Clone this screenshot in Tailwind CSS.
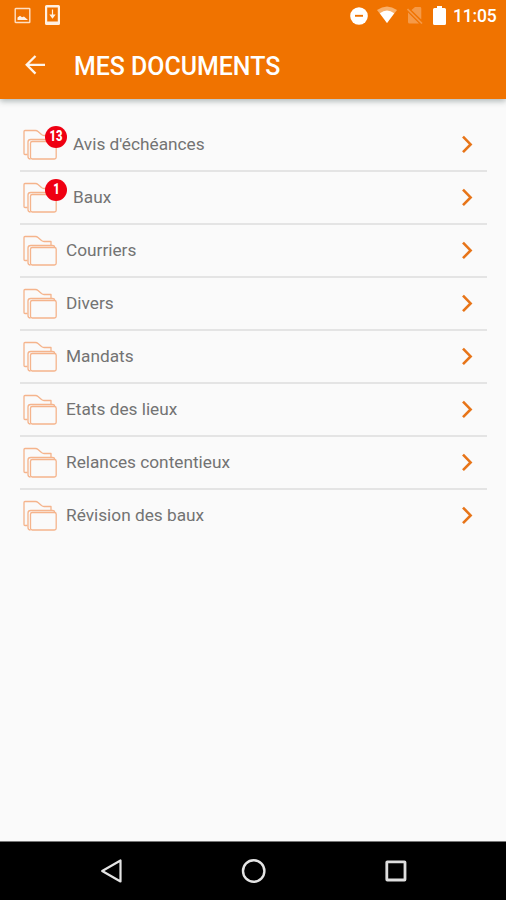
<!DOCTYPE html>
<html lang="fr">
<head>
<meta charset="utf-8">
<title>Mes documents</title>
<script src="https://cdn.jsdelivr.net/npm/@tailwindcss/browser@4"></script>
</head>
<body class="w-[506px] h-[900px] overflow-hidden flex flex-col bg-[#fafafa] font-[Roboto,sans-serif]">
<svg class="hidden">
  <symbol id="folder" viewBox="0 0 36 32">
    <g fill="none" stroke="#f5b48c" stroke-width="1.300" stroke-linejoin="round">
      <path d="M5.500 25.500H3Q2 25.500 2 24.500V2.500Q2 1.500 3 1.500H13.500Q15 1.500 16 2.400L19.500 5.500Q20.700 6.500 22 6.500H29V10"/>
      <path d="M8.500 30Q6 30 6 27.500V13Q6 10.500 8.800 10.500H30.500Q32.500 10.500 32.800 12.300"/>
      <rect x="8.500" y="12.500" width="25.700" height="17.500" rx="1.800"/>
    </g>
  </symbol>
  <symbol id="chevron" viewBox="0 0 14 20">
    <path d="M3 2.600L10.600 10.400L3 18.200" fill="none" stroke="#e77418" stroke-width="2.600"/>
  </symbol>
</svg>

<header class="h-[99px] shrink-0 bg-[#f07300] text-white shadow-[0_2px_6px_rgba(40,60,60,0.38)]">
  <div class="h-8 flex items-center justify-between pl-[14px] pr-[9px]">
    <div class="flex items-center gap-[14px]">
      <svg class="w-[17px] h-[18px]" viewBox="0 0 17 18"><rect x="1.200" y="1.500" width="14.600" height="14" rx=".6" fill="none" stroke="#ffe0c4" stroke-width="1.400"/><path d="M3.500 13V10.500L6 8.800L8 10.300L10 9.500L14 13Z" fill="#fff0e2"/></svg>
      <svg class="w-4 h-5 -mt-0.5" viewBox="0 0 16 20"><path fill="#fff0e2" fill-rule="evenodd" d="M1.500 0H13.500Q15 0 15 1.500V18.500Q15 20 13.500 20H1.500Q0 20 0 18.500V1.500Q0 0 1.500 0ZM2.200 2.500V16.500H12.800V2.500Z"/><path d="M7.500 4.500V12M5.500 10H9.500L7.500 12.800Z" fill="#fff0e2" stroke="#fff0e2" stroke-width="1.200"/></svg>
    </div>
    <div class="flex items-center">
      <svg class="w-[18px] h-[18px] mr-[9px] mt-[-1px]" viewBox="0 0 18 18"><circle cx="9" cy="9" r="8.800" fill="#fff"/><path d="M5 8.800H13" stroke="#f07300" stroke-width="1.900"/></svg>
      <svg class="w-5 h-[18px] mr-[10px] -mt-0.5" viewBox="0 0 20 18"><path d="M0 4Q10-3 20 4L10 17Z" fill="#f8b06b"/><path d="M2.800 7.300Q10 1.800 17.200 7.300L10 17Z" fill="#fff"/></svg>
      <svg class="w-4 h-[17px] mr-[10px] -mt-0.5" viewBox="0 0 16 17"><path d="M4.500 3L8 0H13Q14.300 0 14.300 1.400V12.500ZM1 5.500L12 16.500H2.500Q1 16.500 1 15Z" fill="#f59a48"/><path d="M.5 2L15 16.500" stroke="#f59a48" stroke-width="1.600"/></svg>
      <svg class="w-[13px] h-[19px] mr-[7px] mt-[-1px]" viewBox="0 0 13 19"><path d="M4 0H9V2H11.500Q13 2 13 3.500V17.500Q13 19 11.500 19H1.500Q0 19 0 17.500V3.500Q0 2 1.500 2H4Z" fill="#fff"/></svg>
      <span class="w-[44px] pt-0.5 text-[17.500px] tracking-[-0.200px] leading-none font-medium whitespace-nowrap">11:05</span>
    </div>
  </div>
  <div class="h-[67px] flex items-center pl-[25px]">
    <svg class="w-5 h-5 -mt-0.5" viewBox="0 0 20 20"><path d="M10.500 1L1.700 9.800L10.500 18.600M1.700 9.800H20" fill="none" stroke="#fff4ea" stroke-width="2.300"/></svg>
    <h1 class="ml-[29px] pt-[3px] text-[24.900px] leading-none font-medium whitespace-nowrap">MES DOCUMENTS</h1>
  </div>
</header>

<main class="grow pt-5 pl-5 pr-[19px]">
  <ul class="text-[17.250px] text-[#737373] [&>li]:h-[53px] [&>li]:flex [&>li]:items-center [&>li]:border-b-2 [&>li]:border-[#e4e4e4] [&>li:last-child]:border-transparent [&>li>span]:grow [&>li>span]:whitespace-nowrap">
    <li><div class="relative mr-[15px]"><svg class="w-9 h-8 ml-0.5"><use href="#folder"/></svg><div class="absolute left-[25px] -top-[3px] w-[22px] h-[22px] rounded-full bg-[#ef0012] text-white text-[15.500px] leading-none font-bold flex items-center justify-center"><b class="scale-x-[0.720]">13</b></div></div><span>Avis d'échéances</span><svg class="w-[14px] h-5 mr-[13px] -mt-0.5"><use href="#chevron"/></svg></li>
    <li><div class="relative mr-[15px]"><svg class="w-9 h-8 ml-0.5"><use href="#folder"/></svg><div class="absolute left-[25px] -top-[3px] w-[22px] h-[22px] rounded-full bg-[#ef0012] text-white text-[15.500px] leading-none font-bold flex items-center justify-center"><b class="scale-x-[0.720]">1</b></div></div><span>Baux</span><svg class="w-[14px] h-5 mr-[13px] -mt-0.5"><use href="#chevron"/></svg></li>
    <li><svg class="w-9 h-8 ml-0.5 mr-2"><use href="#folder"/></svg><span>Courriers</span><svg class="w-[14px] h-5 mr-[13px] -mt-0.5"><use href="#chevron"/></svg></li>
    <li><svg class="w-9 h-8 ml-0.5 mr-2"><use href="#folder"/></svg><span>Divers</span><svg class="w-[14px] h-5 mr-[13px] -mt-0.5"><use href="#chevron"/></svg></li>
    <li><svg class="w-9 h-8 ml-0.5 mr-2"><use href="#folder"/></svg><span>Mandats</span><svg class="w-[14px] h-5 mr-[13px] -mt-0.5"><use href="#chevron"/></svg></li>
    <li><svg class="w-9 h-8 ml-0.5 mr-2"><use href="#folder"/></svg><span>Etats des lieux</span><svg class="w-[14px] h-5 mr-[13px] -mt-0.5"><use href="#chevron"/></svg></li>
    <li><svg class="w-9 h-8 ml-0.5 mr-2"><use href="#folder"/></svg><span>Relances contentieux</span><svg class="w-[14px] h-5 mr-[13px] -mt-0.5"><use href="#chevron"/></svg></li>
    <li><svg class="w-9 h-8 ml-0.5 mr-2"><use href="#folder"/></svg><span>Révision des baux</span><svg class="w-[14px] h-5 mr-[13px] -mt-0.5"><use href="#chevron"/></svg></li>
  </ul>
</main>

<nav class="h-[59px] shrink-0 bg-black border-t border-[#777] flex items-center pl-[100px]">
  <svg class="w-6 h-6" viewBox="0 0 24 24"><path d="M2.200 12L20.500 1.500V22.500Z" fill="none" stroke="#e4e4e4" stroke-width="2.200" stroke-linejoin="round"/></svg>
  <svg class="w-[26px] h-[26px] ml-[117px]" viewBox="0 0 26 26"><circle cx="12.700" cy="13" r="10.700" fill="none" stroke="#e4e4e4" stroke-width="2.400"/></svg>
  <svg class="w-6 h-6 ml-[117px]" viewBox="0 0 24 24"><rect x="2.800" y="2.800" width="18.200" height="18.200" rx=".5" fill="none" stroke="#dedede" stroke-width="2.800"/></svg>
</nav>
</body>
</html>
